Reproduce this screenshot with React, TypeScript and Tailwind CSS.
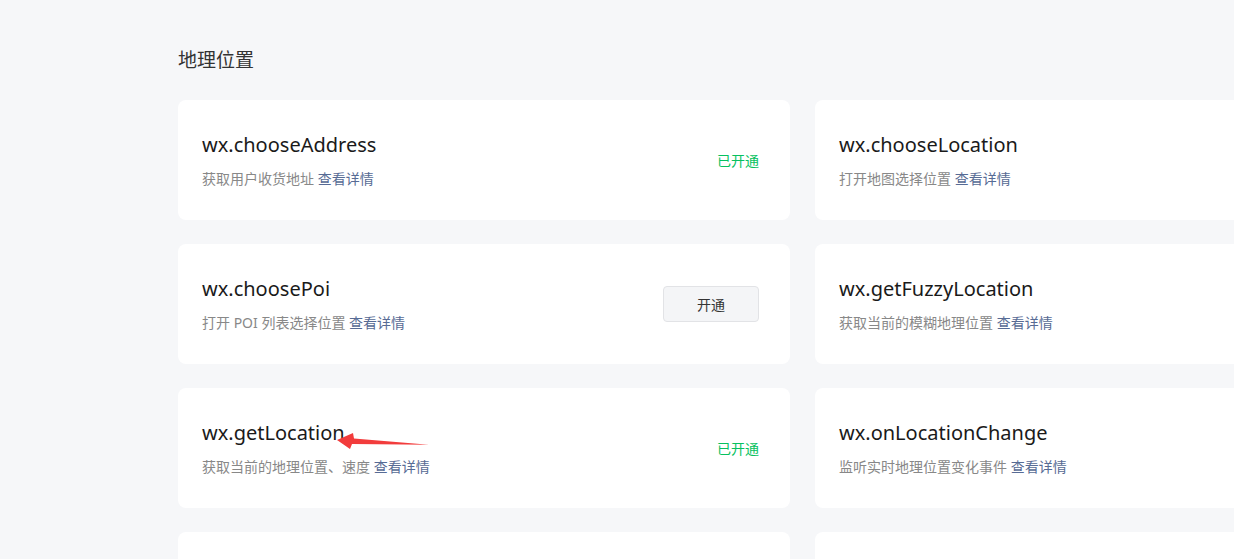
import React from "react";

type Item = { name: string; desc: string; status?: "on" | "btn" | "none" };

const rows: [Item, Item][] = [
  [
    { name: "wx.chooseAddress", desc: "获取用户收货地址", status: "on" },
    { name: "wx.chooseLocation", desc: "打开地图选择位置", status: "none" },
  ],
  [
    { name: "wx.choosePoi", desc: "打开 POI 列表选择位置", status: "btn" },
    { name: "wx.getFuzzyLocation", desc: "获取当前的模糊地理位置", status: "none" },
  ],
  [
    { name: "wx.getLocation", desc: "获取当前的地理位置、速度", status: "on" },
    { name: "wx.onLocationChange", desc: "监听实时地理位置变化事件", status: "none" },
  ],
  [
    { name: "", desc: "", status: "none" },
    { name: "", desc: "", status: "none" },
  ],
];

function Card({ item }: { item: Item }) {
  return (
    <div className="w-[612px] h-[120px] shrink-0 bg-white rounded-[8px] flex items-center pl-[24px] pr-[31px]">
      <div className="flex-1 flex flex-col">
        {item.name && (
          <>
            <div className="text-[20px] leading-[28px] text-[#1a1a1a]">{item.name}</div>
            <div className="text-[14px] leading-[20px] mt-[10px] text-[#888]">
              {item.desc} <span className="text-[#576b95]">查看详情</span>
            </div>
          </>
        )}
      </div>
      {item.status === "on" && <div className="text-[14px] text-[#07c160]">已开通</div>}
      {item.status === "btn" && (
        <div className="w-[96px] h-[36px] rounded-[4px] border border-[#e2e3e6] bg-[#f4f5f7] text-[14px] text-[#333] flex items-center justify-center">
          开通
        </div>
      )}
    </div>
  );
}

export default function App() {
  return (
    <div
      className="relative w-[1234px] h-[559px] overflow-hidden bg-[#f6f7f9]"
      style={{ fontFamily: '"Noto Sans", "Noto Sans CJK SC", sans-serif' }}
    >
      <div className="pl-[178px] pt-[46px]">
        <div className="text-[19px] leading-[28px] text-[#333]">地理位置</div>
        <div className="mt-[26px] flex flex-col gap-[24px]">
          {rows.map((r, i) => (
            <div key={i} className="flex gap-[25px]">
              <Card item={r[0]} />
              <Card item={r[1]} />
            </div>
          ))}
        </div>
      </div>
      <svg className="absolute inset-0 pointer-events-none" width="1234" height="559">
        <polygon
          points="337,440 353,433 354,438.5 429,444.8 352,444 350,449"
          fill="#f23c3c"
        />
      </svg>
    </div>
  );
}
